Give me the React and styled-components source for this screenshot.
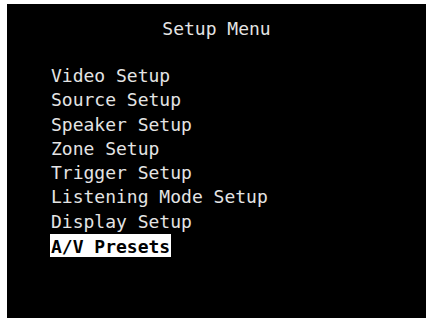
import React from 'react'
import styled, { createGlobalStyle } from 'styled-components'

const GlobalStyle = createGlobalStyle`
  html, body {
    margin: 0;
    padding: 0;
    background: #ffffff;
  }
`;

const Screen = styled.div`
  margin: 4px 0 0 7px;
  width: 419px;
  height: 314px;
  background-color: #000;
  color: #e4e4e4;
  font-family: "DejaVu Sans Mono", "Liberation Mono", monospace;
  font-size: 18px;
  line-height: 24px;
  padding-top: 13px;
  box-sizing: border-box;
`;

const Title = styled.div`
  text-align: center;
  margin-bottom: 23px;
`;

const MenuList = styled.ul`
  list-style: none;
  margin: 0;
  padding: 0 0 0 44px;
  line-height: 24.3px;
`;

const MenuItem = styled.li`
  white-space: pre;
`;

const Label = styled.span`
  display: inline-block;
  vertical-align: baseline;
  padding: ${p => (p.$selected ? '2px 1px 0' : '0')};
  margin-left: ${p => (p.$selected ? '-1px' : '0')};
  line-height: ${p => (p.$selected ? '21px' : 'inherit')};
  background: ${p => (p.$selected ? '#fff' : 'transparent')};
  color: ${p => (p.$selected ? '#000' : 'inherit')};
  font-weight: ${p => (p.$selected ? 'bold' : 'normal')};
`;

const items = [
  'Video Setup',
  'Source Setup',
  'Speaker Setup',
  'Zone Setup',
  'Trigger Setup',
  'Listening Mode Setup',
  'Display Setup',
  'A/V Presets',
]

function App() {
  const selected = 7
  return (
    <>
      <GlobalStyle />
      <Screen>
        <Title>Setup Menu</Title>
        <MenuList>
          {items.map((label, i) => (
            <MenuItem key={label}>
              <Label $selected={i === selected}>{label}</Label>
            </MenuItem>
          ))}
        </MenuList>
      </Screen>
    </>
  )
}

export default App
